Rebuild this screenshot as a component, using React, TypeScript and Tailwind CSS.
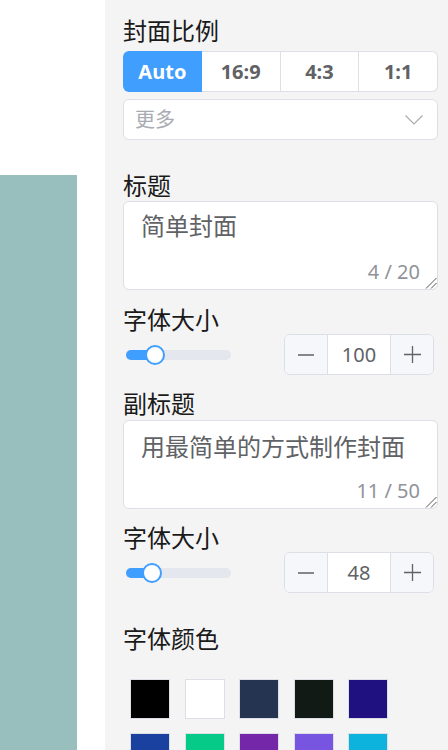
import React from "react";

const Label = ({ text, className = "" }: { text: string; className?: string }) => (
  <div className={`h-[28px] leading-[28px] text-[24px] text-[#1a1a1a] ${className}`}>{text}</div>
);

const Slider = ({ pos }: { pos: number }) => (
  <div className="relative ml-[3px] w-[105px] h-[10px] rounded-full bg-[#e4e7ed]">
    <div className="absolute left-0 top-0 h-[10px] rounded-full bg-[#409eff]" style={{ width: pos }} />
    <div
      className="absolute top-[-5px] w-[20px] h-[20px] rounded-full border-2 border-[#409eff] bg-white"
      style={{ left: pos - 10 }}
    />
  </div>
);

const NumberInput = ({ value }: { value: string }) => (
  <div className="mr-[4px] flex w-[150px] h-[41px] rounded-[6px] border border-[#dcdfe6] overflow-hidden bg-white">
    <div className="w-[43px] bg-[#f5f7fa] border-r border-[#dcdfe6] flex items-center justify-center">
      <svg width="16" height="2" viewBox="0 0 16 2">
        <line x1="0" y1="1" x2="16" y2="1" stroke="#606266" strokeWidth="1.3" />
      </svg>
    </div>
    <div className="flex-1 flex items-center justify-center text-[20px] text-[#606266]">{value}</div>
    <div className="w-[43px] bg-[#f5f7fa] border-l border-[#dcdfe6] flex items-center justify-center">
      <svg width="17" height="17" viewBox="0 0 17 17">
        <line x1="0" y1="8.5" x2="17" y2="8.5" stroke="#606266" strokeWidth="1.3" />
        <line x1="8.5" y1="0" x2="8.5" y2="17" stroke="#606266" strokeWidth="1.3" />
      </svg>
    </div>
  </div>
);

const TextArea = ({ text, count, pt }: { text: string; count: string; pt: string }) => (
  <div className={`relative h-[89px] rounded-[6px] border border-[#dcdfe6] bg-white pl-[17px] ${pt}`}>
    <div className="text-[24px] leading-[36px] text-[#606266]">{text}</div>
    <div className="absolute right-[17px] bottom-[7px] text-[20px] leading-[20px] text-[#909399]">{count}</div>
    <svg className="absolute right-0 bottom-0" width="13" height="13" viewBox="0 0 13 13">
      <line x1="2" y1="12.5" x2="12.5" y2="2" stroke="#555" strokeWidth="1" />
      <line x1="7" y1="12.5" x2="12.5" y2="7" stroke="#555" strokeWidth="1" />
    </svg>
  </div>
);

const colors = [
  "#000000",
  "#ffffff",
  "#243451",
  "#121a16",
  "#201180",
  "#1a40a0",
  "#06cb88",
  "#7427a8",
  "#7855e0",
  "#0db3dc",
];

export default function App() {
  return (
    <div className="flex w-[448px] h-[750px] overflow-hidden bg-white font-['Noto_Sans','Noto_Sans_CJK_SC',sans-serif]">
      <div className="w-[105px] shrink-0 flex flex-col bg-white">
        <div className="h-[175px]" />
        <div className="w-[77px] flex-1 bg-[#98bfbe]" />
      </div>
      <div className="flex-1 bg-[#f4f4f5] pl-[18px] pr-[10px] pt-[17px]">
        <Label text="封面比例" />
        <div className="mt-[6px] grid grid-cols-4 h-[41px]">
          <div className="flex items-center justify-center rounded-l-[6px] bg-[#409eff] text-white font-bold text-[20px]">
            Auto
          </div>
          <div className="flex items-center justify-center bg-white border-y border-r border-[#dcdfe6] text-[#606266] font-bold text-[20px]">
            16:9
          </div>
          <div className="flex items-center justify-center bg-white border-y border-r border-[#dcdfe6] text-[#606266] font-bold text-[20px]">
            4:3
          </div>
          <div className="flex items-center justify-center rounded-r-[6px] bg-white border-y border-r border-[#dcdfe6] text-[#606266] font-bold text-[20px]">
            1:1
          </div>
        </div>
        <div className="mt-[7px] flex h-[41px] items-center justify-between rounded-[6px] border border-[#dcdfe6] bg-white pl-[11px] pr-[14px]">
          <span className="text-[20px] text-[#a8abb2]">更多</span>
          <svg width="18" height="10" viewBox="0 0 18 10">
            <polyline points="0.5,0.5 9,9 17.5,0.5" fill="none" stroke="#a8abb2" strokeWidth="1.2" />
          </svg>
        </div>

        <Label text="标题" className="mt-[32px]" />
        <div className="mt-[1px]">
          <TextArea text="简单封面" count="4 / 20" pt="pt-[6px]" />
        </div>

        <Label text="字体大小" className="mt-[16px]" />
        <div className="flex h-[41px] items-center justify-between">
          <Slider pos={29} />
          <NumberInput value="100" />
        </div>

        <Label text="副标题" className="mt-[15px]" />
        <div className="mt-[2px]">
          <TextArea text="用最简单的方式制作封面" count="11 / 50" pt="pt-[8px]" />
        </div>

        <Label text="字体大小" className="mt-[15px]" />
        <div className="flex h-[41px] items-center justify-between">
          <Slider pos={25.5} />
          <NumberInput value="48" />
        </div>

        <Label text="字体颜色" className="mt-[32px]" />
        <div className="mt-[26px] pl-[7px] grid grid-cols-[repeat(5,40px)] gap-x-[14.5px] gap-y-[14px]">
          {colors.map((c) => (
            <div key={c} className="w-[40px] h-[40px] border border-[#dcdfe6]" style={{ backgroundColor: c }} />
          ))}
        </div>
      </div>
    </div>
  );
}
